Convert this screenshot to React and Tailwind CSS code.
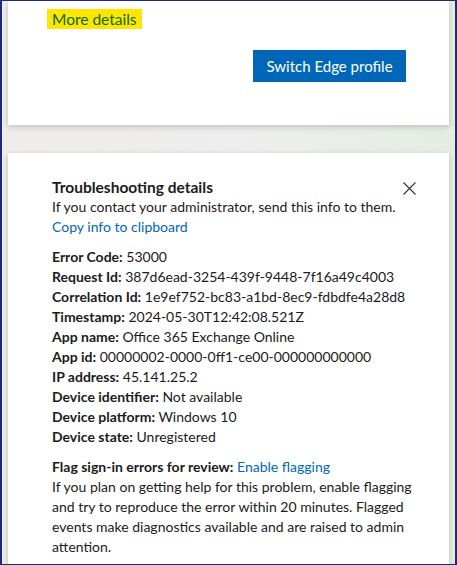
import React from 'react';

const rows = [
  ['Error Code:', '53000'],
  ['Request Id:', '387d6ead-3254-439f-9448-7f16a49c4003'],
  ['Correlation Id:', '1e9ef752-bc83-a1bd-8ec9-fdbdfe4a28d8'],
  ['Timestamp:', '2024-05-30T12:42:08.521Z'],
  ['App name:', 'Office 365 Exchange Online'],
  ['App id:', '00000002-0000-0ff1-ce00-000000000000'],
  ['IP address:', '45.141.25.2'],
  ['Device identifier:', 'Not available'],
  ['Device platform:', 'Windows 10'],
  ['Device state:', 'Unregistered'],
];

export default function App() {
  return (
    <div
      className="w-[457px] h-[565px] overflow-hidden border-y border-l-2 border-r-2 border-[#1f2a78] bg-gradient-to-r from-[#efecea] via-[#eeeeee] to-[#e4ede2] text-[14px] leading-[20px] text-[#1b1b1b]"
      style={{ fontFamily: 'Lato, "Open Sans", sans-serif' }}
    >
      <div className="mx-[6px] h-[124px] bg-white shadow-[0_2px_6px_rgba(0,0,0,0.18)] flex flex-col">
        <div className="pl-[39px] pt-[8px]">
          <span className="inline-block bg-[#ffe600] text-[#0b6a0b] px-[5px] py-[1px] leading-[18px] text-[15.5px]">More details</span>
        </div>
        <div className="flex justify-end pr-[43px] mt-[20px]">
          <button className="w-[153px] h-[32px] bg-[#0067b8] text-white text-[15px]">Switch Edge profile</button>
        </div>
      </div>

      <div className="mx-[6px] mt-[28px] h-[420px] bg-white shadow-[0_2px_6px_rgba(0,0,0,0.18)] pl-[44px] pr-[20px] pt-[24px] relative">
        <button className="absolute right-[33px] top-[29px] text-[#333]" aria-label="Close">
          <svg width="13" height="13" viewBox="0 0 13 13" fill="none" stroke="currentColor" strokeWidth="1.1">
            <path d="M0.5 0.5L12.5 12.5M12.5 0.5L0.5 12.5" />
          </svg>
        </button>
        <div className="font-bold text-[15.5px]">Troubleshooting details</div>
        <div>If you contact your administrator, send this info to them.</div>
        <div className="text-[#0067b8]">Copy info to clipboard</div>
        <div className="mt-[10px]">
          {rows.map(([k, v]) => (
            <div key={k} className="whitespace-nowrap">
              <span className="font-bold">{k}</span> {v}
            </div>
          ))}
        </div>
        <div className="mt-[10px]">
          <span className="font-bold">Flag sign-in errors for review:</span>{' '}
          <span className="text-[#0067b8]">Enable flagging</span>
        </div>
        <div className="w-[372px]">
          If you plan on getting help for this problem, enable flagging and try to reproduce the error within 20 minutes. Flagged events make diagnostics available and are raised to admin attention.
        </div>
      </div>
    </div>
  );
}
